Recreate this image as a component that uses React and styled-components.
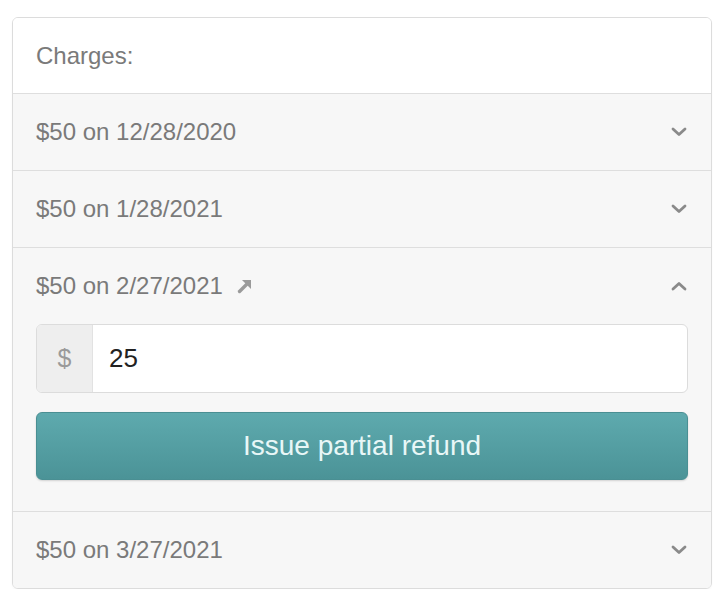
import React from 'react';
import styled, { createGlobalStyle } from 'styled-components';

const GlobalStyle = createGlobalStyle`
  html, body {
    margin: 0;
    padding: 0;
    background: #fff;
  }
  body {
    font-family: "Liberation Sans", Arial, sans-serif;
    -webkit-font-smoothing: antialiased;
  }
`;

const Page = styled.div`
  padding: 17px 8px 0 12px;
`;

const Card = styled.div`
  border: 1px solid #dcdcdc;
  border-radius: 6px;
  overflow: hidden;
  box-shadow: 0 1px 2px rgba(0, 0, 0, 0.04);
`;

const Header = styled.div`
  height: 75px;
  display: flex;
  align-items: center;
  padding: 0 23px;
  background: #fff;
  color: #7a7a7a;
  font-size: 24px;
`;

const Item = styled.div`
  background: #f7f7f7;
  border-top: 1px solid #dedede;
`;

const ItemHead = styled.div`
  height: 76px;
  display: flex;
  align-items: center;
  justify-content: space-between;
  padding: 0 23px;
  color: #7a7a7a;
  font-size: 24px;
`;

const Title = styled.span`
  display: flex;
  align-items: center;
  gap: 14px;
`;

const Body = styled.div`
  padding: 0 23px 31px;
  display: flex;
  flex-direction: column;
  gap: 19px;
`;

const InputGroup = styled.div`
  display: flex;
  height: 67px;
  border: 1px solid #dcdcdc;
  border-radius: 6px;
  overflow: hidden;
  background: #fff;
`;

const Addon = styled.div`
  width: 55px;
  display: flex;
  align-items: center;
  justify-content: center;
  background: #eeeeee;
  border-right: 1px solid #e2e2e2;
  color: #9a9a9a;
  font-size: 25px;
`;

const Field = styled.div`
  flex: 1;
  display: flex;
  align-items: center;
  padding: 0 16px;
  color: #222;
  font-size: 26px;
`;

const Button = styled.button`
  height: 68px;
  border: 1px solid #4a8f93;
  border-radius: 6px;
  background: linear-gradient(#5eaaae, #4b9397);
  color: #e8f7f7;
  font-family: "Liberation Sans", Arial, sans-serif;
  font-size: 28px;
  box-shadow: 0 1px 2px rgba(0, 0, 0, 0.15);
`;

const Chevron = ({ up }) => (
  <svg width="16" height="10" viewBox="0 0 16 10" style={{ marginRight: 1 }}>
    <path
      d={up ? 'M2 8 L8 2.5 L14 8' : 'M2 2 L8 7.5 L14 2'}
      fill="none"
      stroke="#8a8a8a"
      strokeWidth="2.8"
      strokeLinecap="round"
      strokeLinejoin="round"
    />
  </svg>
);

const ExternalArrow = () => (
  <svg width="16" height="16" viewBox="0 0 16 16">
    <path d="M2.5 13.5 L11 5" stroke="#9a9a9a" strokeWidth="3.4" strokeLinecap="round" />
    <path d="M5 2 H14 V11 Z" fill="#9a9a9a" />
  </svg>
);

const charges = [
  { amount: 50, date: '12/28/2020' },
  { amount: 50, date: '1/28/2021' },
  { amount: 50, date: '2/27/2021', open: true },
  { amount: 50, date: '3/27/2021' },
];

export default function App() {
  return (
    <Page>
      <GlobalStyle />
      <Card>
        <Header>Charges:</Header>
        {charges.map((c) => (
          <Item key={c.date}>
            <ItemHead>
              <Title>
                ${c.amount} on {c.date}
                {c.open && <ExternalArrow />}
              </Title>
              <Chevron up={c.open} />
            </ItemHead>
            {c.open && (
              <Body>
                <InputGroup>
                  <Addon>$</Addon>
                  <Field>25</Field>
                </InputGroup>
                <Button>Issue partial refund</Button>
              </Body>
            )}
          </Item>
        ))}
      </Card>
    </Page>
  );
}
